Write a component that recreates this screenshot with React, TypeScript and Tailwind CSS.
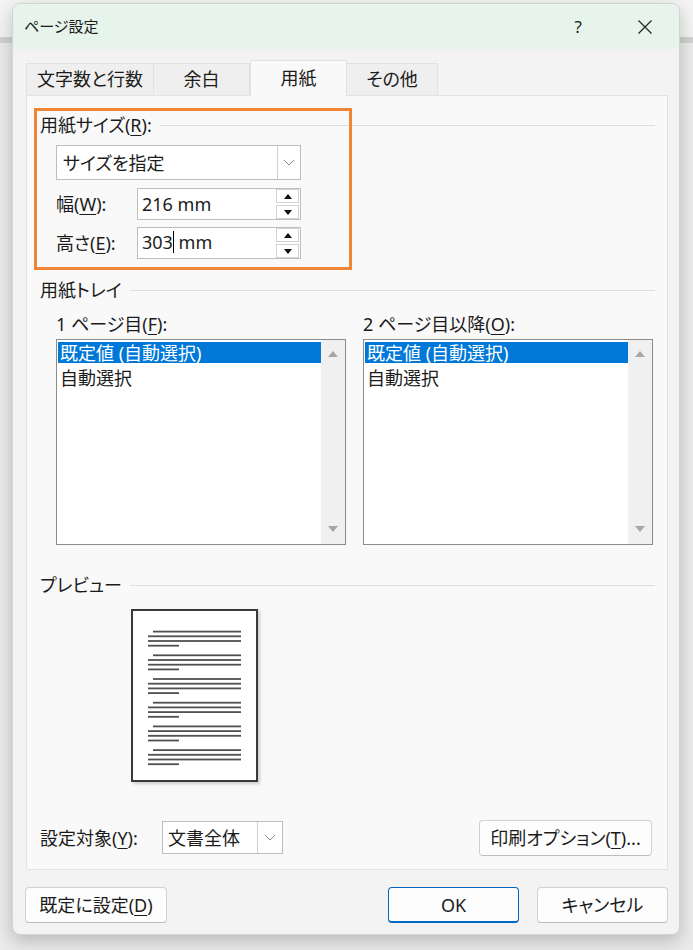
import type { ReactNode } from 'react';

function Key({ children }: { children: ReactNode }) {
  return <u className="underline underline-offset-[3px] decoration-1">{children}</u>;
}

function GroupLabel({ children }: { children: ReactNode }) {
  return (
    <div className="flex items-center gap-[8px] h-[22px]">
      <span className="leading-none">{children}</span>
      <div className="flex-1 h-px bg-[#dedede]" />
    </div>
  );
}

function Chevron() {
  return (
    <svg width="12" height="7" viewBox="0 0 12 7">
      <path d="M1 1l5 5 5-5" fill="none" stroke="#8a8a8a" strokeWidth="1" />
    </svg>
  );
}

function Spinner() {
  return (
    <div className="flex flex-col gap-[2px] mr-[1px]">
      <div className="w-[23px] h-[14px] border border-[#d2d2d2] flex items-center justify-center">
        <svg width="8" height="5" viewBox="0 0 8 5">
          <path d="M0 5L4 0L8 5Z" fill="#111" />
        </svg>
      </div>
      <div className="w-[23px] h-[14px] border border-[#d2d2d2] flex items-center justify-center">
        <svg width="8" height="5" viewBox="0 0 8 5">
          <path d="M0 0L4 5L8 0Z" fill="#111" />
        </svg>
      </div>
    </div>
  );
}

function ListBox() {
  return (
    <div className="w-[290px] h-[206px] border border-[#8c8c8c] bg-white flex">
      <div className="flex-1 pt-[2px] pl-[1px]">
        <div className="h-[21px] bg-[#0078d7] text-white flex items-center pl-[2px] leading-none">
          既定値 (自動選択)
        </div>
        <div className="mt-[4px] h-[21px] flex items-center pl-[2px] leading-none">自動選択</div>
      </div>
      <div className="w-[24px] bg-[#f0f0f0] flex flex-col items-center justify-between pt-[11px] pb-[12px]">
        <svg width="10" height="6" viewBox="0 0 10 6">
          <path d="M0 6L5 0L10 6Z" fill="#a6a6a6" />
        </svg>
        <svg width="10" height="6" viewBox="0 0 10 6">
          <path d="M0 0L5 6L10 0Z" fill="#a6a6a6" />
        </svg>
      </div>
    </div>
  );
}

function PagePreview() {
  const paras = [0, 1, 2, 3, 4, 5];
  return (
    <div className="w-[127px] h-[173px] border-2 border-[#3a3a3a] bg-white shadow-[2px_2px_3px_rgba(0,0,0,0.18)]">
      <svg width="123" height="169" viewBox="0 0 123 169">
        {paras.map((p) => {
          const y0 = 19.7 + 23.7 * p;
          return (
            <g key={p} fill="#505050">
              <rect x="20" y={y0} width="88" height="1.8" />
              <rect x="15" y={y0 + 4.7} width="93" height="1.8" />
              <rect x="15" y={y0 + 9.4} width="93" height="1.8" />
              <rect x="15" y={y0 + 14.1} width="31" height="1.8" />
            </g>
          );
        })}
      </svg>
    </div>
  );
}

function Button({ children, w, primary }: { children: ReactNode; w: string; primary?: boolean }) {
  return (
    <div
      className={
        primary
          ? `${w} h-[36px] rounded-[4px] bg-[#fdfdfd] border border-[#0067c0] border-b-2 flex items-center justify-center leading-none`
          : `${w} h-[36px] rounded-[4px] bg-[#fdfdfd] border border-[#d1d1d1] border-b-[#bdbdbd] flex items-center justify-center leading-none`
      }
    >
      {children}
    </div>
  );
}

export default function App() {
  return (
    <div className="w-[693px] h-[950px] overflow-hidden bg-[linear-gradient(#f4f4f4_0,#f4f4f4_37px,#d2d2d2_37px,#d2d2d2_43px,#ebebeb_43px)] pt-[3px] pl-[12px] font-['Noto_Sans','Noto_Sans_CJK_JP',sans-serif] [font-feature-settings:'palt'] text-[18px] text-[#1b1b1b]">
      <div className="w-[668px] h-[932px] rounded-[8px] bg-[#f3f3f3] border border-[#d3d3d3] shadow-[0_6px_18px_rgba(0,0,0,0.22)] overflow-hidden flex flex-col">
        {/* title bar */}
        <div className="h-[45px] shrink-0 bg-[#e6f4ec] flex items-center pl-[11px] pr-[27px]">
          <span className="text-[15px] leading-none">ページ設定</span>
          <span className="ml-auto mr-[56px] text-[17px] leading-none">?</span>
          <svg width="14" height="14" viewBox="0 0 14 14">
            <path d="M0.5 0.5L13.5 13.5M13.5 0.5L0.5 13.5" stroke="#222" strokeWidth="1.2" />
          </svg>
        </div>

        {/* tabs */}
        <div className="mt-[11px] pl-[13px] h-[35px] flex items-end">
          <div className="w-[128px] h-[32px] bg-[#efefef] border border-b-0 border-[#e2e2e2] flex items-center justify-center">
            文字数と行数
          </div>
          <div className="w-[96px] h-[32px] bg-[#efefef] border border-b-0 border-l-0 border-[#e2e2e2] flex items-center justify-center">
            余白
          </div>
          <div className="relative z-10 -mb-px w-[97px] h-[36px] bg-[#f9f9f9] border border-b-0 border-[#e2e2e2] flex items-center justify-center">
            用紙
          </div>
          <div className="w-[91px] h-[32px] bg-[#efefef] border border-b-0 border-l-0 border-[#e2e2e2] flex items-center justify-center">
            その他
          </div>
        </div>

        {/* panel */}
        <div className="ml-[13px] w-[642px] h-[775px] shrink-0 bg-[#f9f9f9] border border-[#e3e3e3] pl-[13px] pr-[12px] pt-[18px] flex flex-col">
          {/* paper size group */}
          <div className="relative">
            <GroupLabel>
              用紙サイズ(<Key>R</Key>):
            </GroupLabel>
            <div className="mt-[9px] ml-[16px] w-[245px] h-[35px] bg-white border border-[#bdbdbd] flex items-center">
              <span className="flex-1 pl-[6px] leading-none">サイズを指定</span>
              <div className="w-[23px] h-full border-l border-[#cfcfcf] flex items-center justify-center">
                <Chevron />
              </div>
            </div>
            <div className="mt-[8px] ml-[16px] flex items-center">
              <span className="w-[81px] leading-none">
                幅(<Key>W</Key>):
              </span>
              <div className="w-[164px] h-[32px] bg-white border border-[#bdbdbd] flex items-center">
                <span className="flex-1 pl-[4px] leading-none">216 mm</span>
                <Spinner />
              </div>
            </div>
            <div className="mt-[7px] ml-[16px] flex items-center">
              <span className="w-[81px] leading-none">
                高さ(<Key>E</Key>):
              </span>
              <div className="w-[164px] h-[32px] bg-white border border-[#bdbdbd] flex items-center">
                <span className="flex-1 pl-[4px] leading-none whitespace-pre">
                  303<span className="inline-block w-px h-[22px] bg-black align-middle -mt-[3px]" />
                  {' mm'}
                </span>
                <Spinner />
              </div>
            </div>
            {/* orange highlight annotation */}
            <div className="absolute left-[-6px] top-[-6px] w-[318px] h-[162px] border-[3px] border-[#ef8535] pointer-events-none" />
          </div>

          {/* paper tray group */}
          <div className="mt-[20px]">
            <GroupLabel>用紙トレイ</GroupLabel>
          </div>
          <div className="ml-[16px] flex gap-[17px]">
            <div className="flex flex-col">
              <div className="mt-[12px] h-[22px] flex items-center leading-none">
                1 ページ目(<Key>F</Key>):
              </div>
              <div className="mt-[4px]">
                <ListBox />
              </div>
            </div>
            <div className="flex flex-col">
              <div className="mt-[12px] h-[22px] flex items-center leading-none">
                2 ページ目以降(<Key>O</Key>):
              </div>
              <div className="mt-[4px]">
                <ListBox />
              </div>
            </div>
          </div>

          {/* preview group */}
          <div className="mt-[29px]">
            <GroupLabel>プレビュー</GroupLabel>
          </div>
          <div className="mt-[13px] ml-[91px]">
            <PagePreview />
          </div>

          {/* apply to / print options */}
          <div className="mt-[38px] h-[35px] flex items-center">
            <span className="w-[122px] leading-none">
              設定対象(<Key>Y</Key>):
            </span>
            <div className="w-[121px] h-[33px] bg-white border border-[#bdbdbd] flex items-center">
              <span className="flex-1 pl-[5px] leading-none">文書全体</span>
              <div className="w-[25px] h-full border-l border-[#cfcfcf] flex items-center justify-center">
                <Chevron />
              </div>
            </div>
            <div className="ml-auto mr-[3px]">
              <Button w="w-[173px]">
                印刷オプション(<Key>T</Key>)...
              </Button>
            </div>
          </div>
        </div>

        {/* dialog buttons */}
        <div className="mt-[17px] pl-[12px] pr-[11px] flex items-center">
          <Button w="w-[142px]">
            既定に設定(<Key>D</Key>)
          </Button>
          <div className="ml-auto flex gap-[18px]">
            <Button w="w-[131px]" primary>
              OK
            </Button>
            <Button w="w-[131px]">キャンセル</Button>
          </div>
        </div>
      </div>
    </div>
  );
}
